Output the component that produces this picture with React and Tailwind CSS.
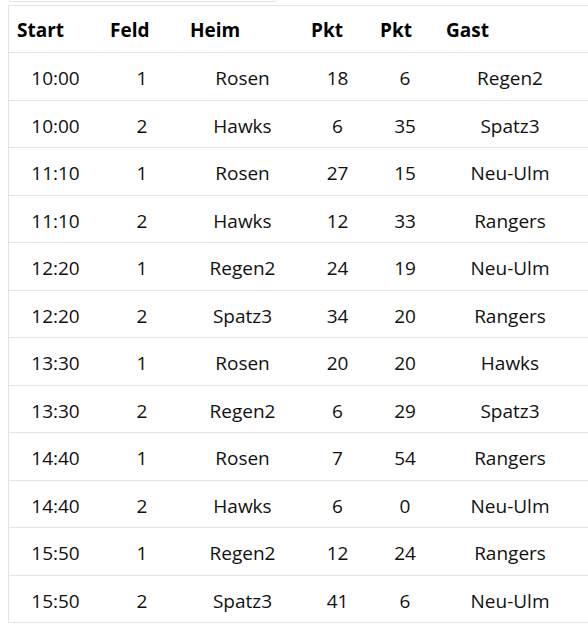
const rows = [
  ["10:00", "1", "Rosen", "18", "6", "Regen2"],
  ["10:00", "2", "Hawks", "6", "35", "Spatz3"],
  ["11:10", "1", "Rosen", "27", "15", "Neu-Ulm"],
  ["11:10", "2", "Hawks", "12", "33", "Rangers"],
  ["12:20", "1", "Regen2", "24", "19", "Neu-Ulm"],
  ["12:20", "2", "Spatz3", "34", "20", "Rangers"],
  ["13:30", "1", "Rosen", "20", "20", "Hawks"],
  ["13:30", "2", "Regen2", "6", "29", "Spatz3"],
  ["14:40", "1", "Rosen", "7", "54", "Rangers"],
  ["14:40", "2", "Hawks", "6", "0", "Neu-Ulm"],
  ["15:50", "1", "Regen2", "12", "24", "Rangers"],
  ["15:50", "2", "Spatz3", "41", "6", "Neu-Ulm"],
];

const headers = ["Start", "Feld", "Heim", "Pkt", "Pkt", "Gast"];

const cols = "grid grid-cols-[93px_80px_121px_69px_66px_144px_1fr]";

export default function App() {
  return (
    <div
      className="min-h-[639px] w-full overflow-hidden bg-white pl-2 text-[19px] text-[#111]"
      style={{ fontFamily: '"Open Sans", "Noto Sans", sans-serif' }}
    >
      <div className="ml-px h-[2px] w-[267px] rounded-b-sm border-x border-b border-[#e3e3e3]" />

      <div className="mt-[3px] w-[580px] border-l border-t border-[#e3e3e3]">
        <div className={`${cols} h-[47px] border-b border-[#e3e3e3]`}>
          {headers.map((h, i) => (
            <div key={i} className="flex items-center pl-2 pt-[3px] font-bold text-black">
              {h}
            </div>
          ))}
          <div />
        </div>

        {rows.map((r, i) => (
          <div key={i} className={`${cols} h-[47.5px] border-b border-[#e3e3e3]`}>
            {r.map((c, j) => (
              <div key={j} className="flex items-center justify-center pt-[4px]">
                {c}
              </div>
            ))}
            <div />
          </div>
        ))}
      </div>
    </div>
  );
}
